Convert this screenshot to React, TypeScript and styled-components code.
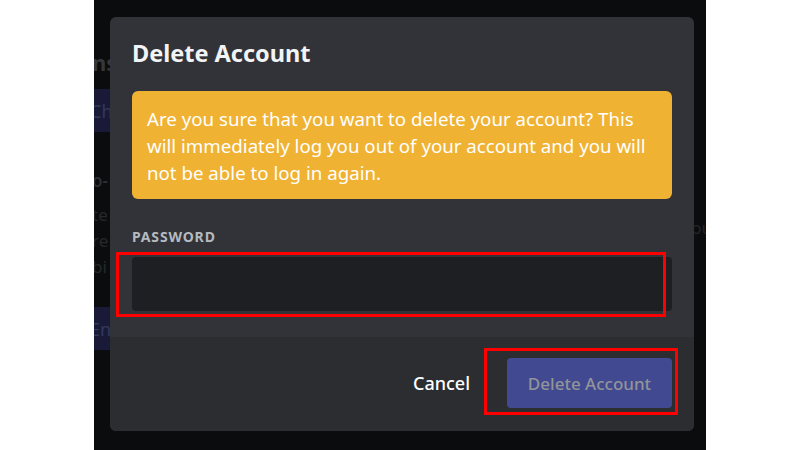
import styled, { createGlobalStyle } from "styled-components";

const GlobalStyle = createGlobalStyle`
  html, body {
    margin: 0;
    padding: 0;
    background: #ffffff;
  }
  * {
    box-sizing: border-box;
  }
`;

const Page = styled.div`
  width: 800px;
  height: 450px;
  display: flex;
  justify-content: center;
  background: #ffffff;
  font-family: "Noto Sans", "Open Sans", sans-serif;
`;

const Stage = styled.div`
  position: relative;
  width: 612px;
  height: 450px;
  background: #0b0c0e;
  overflow: hidden;
`;

// faded settings page behind the modal
const Backdrop = styled.div`
  display: flex;
  justify-content: space-between;
  height: 100%;
`;

const BackdropColumn = styled.div`
  display: flex;
  flex-direction: column;
  align-items: flex-start;
  padding-top: 48px;
  margin-left: -2px;
`;

const BackdropHeading = styled.div`
  font-size: 22px;
  font-weight: 700;
  line-height: 28px;
  color: #35373b;
  margin-bottom: 13px;
`;

const BackdropButton = styled.div`
  height: 43px;
  padding: 0 12px 0 4px;
  margin-left: -6px;
  display: flex;
  align-items: center;
  background: #181a38;
  color: #34385a;
  font-size: 18px;
  border-radius: 3px;
`;

const BackdropSubhead = styled.div`
  margin-top: 36px;
  font-size: 17px;
  font-weight: 600;
  line-height: 26px;
  color: #2c2e32;
`;

const BackdropText = styled.div`
  font-size: 17px;
  line-height: 26px;
  color: #26282b;
  margin-top: ${(p: { $first?: boolean }) => (p.$first ? "8px" : "0")};
`;

const BackdropSpacer = styled.div`
  height: 27px;
`;

const SideColumn = styled.div`
  padding-top: 215px;
  margin-right: -6px;
  font-size: 17px;
  line-height: 26px;
  color: #232528;
`;

const Modal = styled.div`
  position: absolute;
  left: 16px;
  top: 17px;
  width: 584px;
  height: 414px;
  display: flex;
  flex-direction: column;
  background: #313338;
  border-radius: 6px;
  overflow: hidden;
`;

const ModalBody = styled.div`
  display: flex;
  flex-direction: column;
  padding: 20px 22px 26px;
`;

const Title = styled.h1`
  margin: 0 0 22px;
  font-size: 23.5px;
  font-weight: 700;
  line-height: 32px;
  color: #f2f3f5;
`;

const Warning = styled.div`
  height: 108px;
  padding: 14px 15px;
  background: #f0b232;
  border-radius: 6px;
  color: #ffffff;
  font-size: 18.7px;
  line-height: 27px;
`;

const Label = styled.label`
  margin-top: 30px;
  margin-bottom: 12px;
  font-size: 14px;
  font-weight: 700;
  line-height: 16px;
  letter-spacing: 0.06em;
  color: #b5bac1;
`;

const PasswordInput = styled.input`
  height: 54px;
  width: 100%;
  border: none;
  border-radius: 4px;
  background: #1e1f22;
  outline: none;
  padding: 0 14px;
  color: #dbdee1;
  font-size: 18px;
  font-family: inherit;
`;

const ModalFooter = styled.div`
  flex: 1;
  display: flex;
  justify-content: flex-end;
  align-items: center;
  gap: 37px;
  padding: 0 22px 2px;
  background: #2b2d31;
`;

const CancelButton = styled.button`
  border: none;
  background: none;
  padding: 0;
  color: #ffffff;
  font-family: inherit;
  font-size: 18px;
  font-weight: 500;
  cursor: pointer;
`;

const DeleteButton = styled.button`
  width: 165px;
  height: 50px;
  border: none;
  border-radius: 4px;
  background: #414991;
  color: #929499;
  font-family: inherit;
  font-size: 17px;
  font-weight: 500;
  cursor: not-allowed;
`;

// red annotation frames drawn over the screenshot
const Highlight = styled.div<{ $x: number; $y: number; $w: number; $h: number }>`
  position: absolute;
  left: ${(p) => p.$x}px;
  top: ${(p) => p.$y}px;
  width: ${(p) => p.$w}px;
  height: ${(p) => p.$h}px;
  border: 3px solid #ff0000;
  pointer-events: none;
`;

const App = () => {
  return (
    <>
      <GlobalStyle />
      <Page>
        <Stage>
          <Backdrop>
            <BackdropColumn>
              <BackdropHeading>ns</BackdropHeading>
              <BackdropButton>Ch</BackdropButton>
              <BackdropSubhead>o-</BackdropSubhead>
              <BackdropText $first>te</BackdropText>
              <BackdropText>re</BackdropText>
              <BackdropText>bi</BackdropText>
              <BackdropSpacer />
              <BackdropButton>En</BackdropButton>
            </BackdropColumn>
            <SideColumn>ou</SideColumn>
          </Backdrop>

          <Modal>
            <ModalBody>
              <Title>Delete Account</Title>
              <Warning>
                Are you sure that you want to delete your account? This will immediately log you out
                of your account and you will not be able to log in again.
              </Warning>
              <Label htmlFor="password">PASSWORD</Label>
              <PasswordInput id="password" type="password" />
            </ModalBody>
            <ModalFooter>
              <CancelButton>Cancel</CancelButton>
              <DeleteButton disabled>Delete Account</DeleteButton>
            </ModalFooter>
          </Modal>

          <Highlight $x={22} $y={252} $w={550} $h={65} />
          <Highlight $x={390} $y={348} $w={194} $h={67} />
        </Stage>
      </Page>
    </>
  );
};

export default App;
